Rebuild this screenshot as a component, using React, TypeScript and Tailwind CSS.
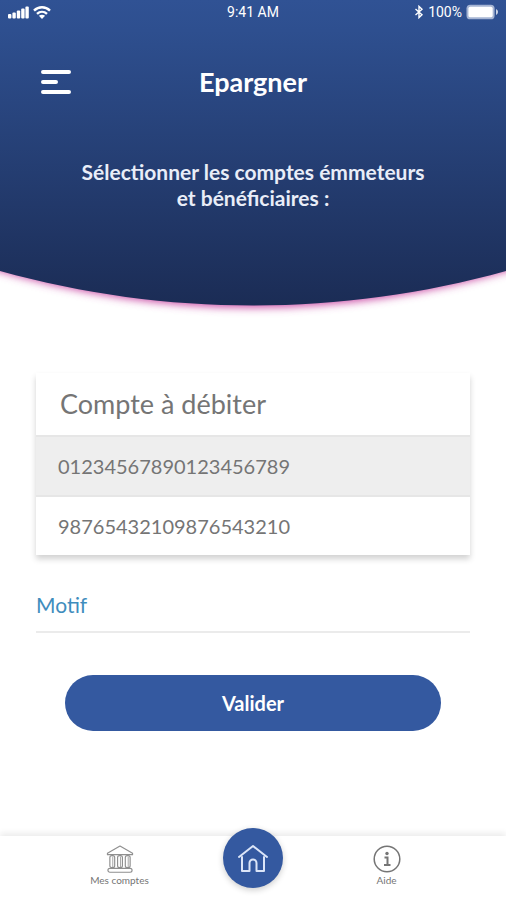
import { useState } from "react";

const accounts = ["01234567890123456789", "98765432109876543210"];

function HeaderBackdrop() {
  return (
    <svg
      className="absolute inset-0 h-full w-full"
      viewBox="0 0 506 325"
      preserveAspectRatio="none"
      aria-hidden="true"
    >
      <defs>
        <linearGradient id="sky" x1="0" y1="0" x2="0" y2="1">
          <stop offset="0" stopColor="#305294" />
          <stop offset="0.1" stopColor="#2e4f8f" />
          <stop offset="1" stopColor="#1b2c55" />
        </linearGradient>
        <filter id="glow" x="-10%" y="-10%" width="120%" height="120%">
          <feGaussianBlur stdDeviation="4" />
        </filter>
      </defs>
      <path d="M-60 200V252Q253 363 566 252V200Z" fill="#c94aa4" filter="url(#glow)" />
      <path d="M0 0H506V271C340 317 166 317 0 271Z" fill="url(#sky)" />
    </svg>
  );
}

function StatusBar() {
  return (
    <div className="grid h-6 grid-cols-3 items-center px-2 font-['Roboto',sans-serif] text-sm">
      <div className="flex items-center gap-1">
        <svg width="21" height="13" viewBox="0 0 21 13" fill="currentColor" aria-hidden="true">
          <rect x="0" y="8" width="3.4" height="4.5" rx="1" />
          <rect x="4.4" y="6.5" width="3.4" height="6" rx="1" />
          <rect x="8.8" y="4.5" width="3.4" height="8" rx="1" />
          <rect x="13.2" y="2.5" width="3.4" height="10" rx="1" />
          <rect x="17.4" y="0.5" width="3.4" height="12" rx="1" />
        </svg>
        <svg width="18" height="13" viewBox="0 0 18 13" fill="none" stroke="currentColor" strokeWidth="2.4" aria-hidden="true">
          <path d="M1 4.600C5.600 .1 12.400 .1 17 4.600" />
          <path d="M4 7.900C6.900 5.200 11.100 5.200 14 7.900" />
          <path d="M9 13L5.900 9.800C7.700 8.300 10.300 8.300 12.100 9.800Z" fill="currentColor" stroke="none" />
        </svg>
      </div>
      <span className="text-center">9:41 AM</span>
      <div className="flex items-center justify-end gap-1">
        <svg width="10" height="14" viewBox="0 0 10 14" fill="none" stroke="currentColor" strokeWidth="1.400" aria-hidden="true">
          <path d="M1.500 4L8 9.700L5 12.600V1.400L8 4.300L1.500 10" />
        </svg>
        <span>100%</span>
        <svg width="32" height="16" viewBox="0 0 33 16" aria-hidden="true">
          <rect x="0.500" y="0.500" width="29" height="15" rx="4" fill="#a5b4d3" />
          <rect x="2.500" y="2.500" width="25" height="11" rx="2" fill="#fff" />
          <path d="M31 5Q33 6 33 8T31 11Z" fill="#d5dceb" />
        </svg>
      </div>
    </div>
  );
}

function BankIcon() {
  return (
    <svg width="28" height="28" viewBox="0 0 28 29" fill="none" stroke="#8f8f8f" strokeWidth="1.200" strokeLinejoin="round" aria-hidden="true">
      <path d="M14 1L1 8.500V10H27V8.500Z" />
      <rect x="3.500" y="11" width="5" height="12.500" rx="2" />
      <rect x="11.500" y="11" width="5" height="12.500" rx="2" />
      <rect x="19.500" y="11" width="5" height="12.500" rx="2" />
      <path d="M6.500 12V23M14.500 12V23M22.500 12V23" strokeWidth="0.800" />
      <rect x="1.500" y="24.200" width="25" height="4" rx="2" />
    </svg>
  );
}

function HomeIcon() {
  return (
    <svg width="32" height="29" viewBox="0 0 32 29" fill="none" stroke="#dbe5f8" strokeWidth="2" strokeLinecap="round" strokeLinejoin="round" aria-hidden="true">
      <path d="M2 13L16 2L30 13" />
      <path d="M5 13V27H12.500V19A3.500 3.500 0 0 1 19.500 19V27H27V13" />
    </svg>
  );
}

function InfoIcon() {
  return (
    <svg width="28" height="28" viewBox="0 0 28 28" fill="none" stroke="#757575" aria-hidden="true">
      <circle cx="14" cy="14" r="12.800" strokeWidth="1.500" />
      <circle cx="14" cy="8.500" r="1.700" fill="#757575" stroke="none" />
      <path d="M11.500 12.500H14.500V19.500M11 20H17.500" strokeWidth="2" />
    </svg>
  );
}

export default function App() {
  const [selected, setSelected] = useState(accounts[0]);

  return (
    <div className="flex min-h-screen flex-col bg-white font-['Lato',sans-serif] text-[#757575]">
      <header className="relative h-[325px] overflow-hidden text-white">
        <HeaderBackdrop />
        <div className="relative">
          <StatusBar />
          <div className="mt-9 grid grid-cols-[1fr_auto_1fr] items-center px-10">
            <button type="button" aria-label="Menu" className="w-8">
              <svg width="32" height="26" viewBox="0 0 32 26" stroke="currentColor" strokeWidth="4" strokeLinecap="round" aria-hidden="true">
                <path d="M3 3H29M3 13H16M3 23H29" />
              </svg>
            </button>
            <h1 className="text-[27px] leading-11 font-bold">Epargner</h1>
          </div>
          <p className="mx-auto mt-[55px] max-w-[360px] text-center text-[21px] leading-[26px] font-bold text-[#e9edf8]">
            Sélectionner les comptes émmeteurs et bénéficiaires :
          </p>
        </div>
      </header>

      <main className="grow px-9 pt-12">
        <section className="bg-white shadow-[0_4px_6px_rgba(0,0,0,0.18)]">
          <h2 id="debit" className="px-6 text-[27px] leading-[62px]">Compte à débiter</h2>
          <div role="listbox" aria-labelledby="debit">
            {accounts.map((account) => (
              <button
                key={account}
                type="button"
                role="option"
                aria-selected={selected === account}
                onClick={() => setSelected(account)}
                className="block w-full border-[#e6e6e6] px-[22px] text-left text-[20px] leading-[58px] aria-selected:border-y-2 aria-selected:bg-[#eeeeee]"
              >
                {account}
              </button>
            ))}
          </div>
        </section>

        <div className="mt-8 flex items-center border-b-2 border-[#ebebeb] pb-2">
          <label htmlFor="motif" className="text-[21px] leading-9 text-[#3f8dbd]">Motif</label>
          <input id="motif" type="text" className="ml-3 min-w-0 grow bg-transparent text-[20px] outline-none" />
        </div>

        <div className="mt-[42px] px-[29px]">
          <button type="button" className="h-14 w-full rounded-full bg-[#3459a0] text-[20px] font-bold text-white">
            Valider
          </button>
        </div>
      </main>

      <nav className="grid h-16 grid-cols-[1fr_60px_1fr] bg-white shadow-[0_-3px_6px_rgba(0,0,0,0.08)]">
        <a href="#comptes" className="flex flex-col items-center pt-[9px] pl-4 text-[10px] leading-[14px]">
          <BankIcon />
          Mes comptes
        </a>
        <a
          href="#accueil"
          aria-label="Accueil"
          className="-mt-2 flex size-[60px] items-center justify-center rounded-full bg-[#3459a0] shadow-[0_2px_6px_rgba(0,0,0,0.2)]"
        >
          <HomeIcon />
        </a>
        <a href="#aide" className="flex flex-col items-center pt-[9px] pr-4 text-[10px] leading-[14px]">
          <InfoIcon />
          Aide
        </a>
      </nav>
    </div>
  );
}
